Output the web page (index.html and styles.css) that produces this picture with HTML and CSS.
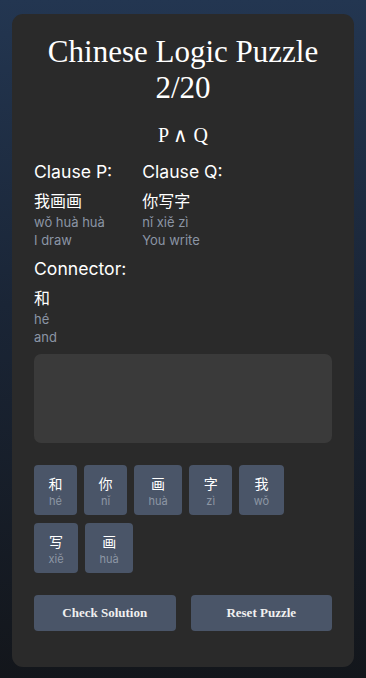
FILE: index.html
```html
<!DOCTYPE html>
<html>
<head>
<meta charset="utf-8">
<link rel="stylesheet" href="styles.css">
</head>
<body>
<div class="card">
  <h1 class="title">Chinese Logic Puzzle<br>2/20</h1>
  <div class="formula">P ∧ Q</div>
  <div class="clauses">
    <div class="clause">
      <div class="label">Clause P:</div>
      <div class="hanzi">我画画</div>
      <div class="sub">wǒ huà huà</div>
      <div class="sub">I draw</div>
    </div>
    <div class="clause">
      <div class="label">Clause Q:</div>
      <div class="hanzi">你写字</div>
      <div class="sub">nǐ xiě zì</div>
      <div class="sub">You write</div>
    </div>
  </div>
  <div class="clause connector">
    <div class="label">Connector:</div>
    <div class="hanzi">和</div>
    <div class="sub">hé</div>
    <div class="sub">and</div>
  </div>
  <div class="dropzone"></div>
  <div class="tiles">
    <div class="tile"><span class="tc">和</span><span class="tp">hé</span></div>
    <div class="tile"><span class="tc">你</span><span class="tp">nǐ</span></div>
    <div class="tile"><span class="tc">画</span><span class="tp">huà</span></div>
    <div class="tile"><span class="tc">字</span><span class="tp">zì</span></div>
    <div class="tile"><span class="tc">我</span><span class="tp">wǒ</span></div>
    <div class="tile"><span class="tc">写</span><span class="tp">xiě</span></div>
    <div class="tile"><span class="tc">画</span><span class="tp">huà</span></div>
  </div>
  <div class="buttons">
    <button class="btn">Check Solution</button>
    <button class="btn">Reset Puzzle</button>
  </div>
</div>
</body>
</html>
```
FILE: styles.css
```css
html, body {
  margin: 0;
  height: 100%;
}
body {
  background: linear-gradient(to bottom, #233651 0%, #1a2536 45%, #13161b 100%);
  padding: 14px 12px 12px;
  box-sizing: border-box;
  font-family: Inter, "Noto Sans CJK SC", sans-serif;
  color: #fff;
}
.card {
  background: #2a2a2a;
  border-radius: 11px;
  padding: 20px 22px 36px;
}
.title {
  margin: 0;
  font-family: "Liberation Serif", serif;
  font-weight: normal;
  font-size: 31px;
  line-height: 36px;
  text-align: center;
  color: #fff;
}
.formula {
  font-family: "Liberation Serif", serif;
  font-size: 20px;
  line-height: 24px;
  text-align: center;
  margin-top: 17px;
  color: #fff;
}
.clauses {
  display: flex;
  gap: 30px;
  margin-top: 15px;
}
.label {
  font-size: 17.6px;
  line-height: 20px;
  color: #fff;
}
.hanzi {
  font-family: "Noto Sans CJK SC", sans-serif;
  font-size: 16px;
  line-height: 24px;
  margin-top: 6px;
  margin-bottom: 1px;
  color: #fff;
}
.sub {
  font-size: 13px;
  line-height: 18px;
  color: #8b95a5;
}
.connector {
  margin-top: 10px;
}
.dropzone {
  margin-top: 8px;
  height: 89px;
  background: #3a3a3a;
  border-radius: 7px;
}
.tiles {
  display: flex;
  flex-wrap: wrap;
  gap: 8px 7px;
  margin-top: 22px;
  width: 260px;
}
.tile {
  display: flex;
  flex-direction: column;
  align-items: center;
  box-sizing: border-box;
  height: 50px;
  padding: 9px 14.5px 0;
  background: #4a5568;
  border-radius: 4px;
}
.tc {
  font-family: "Noto Sans CJK SC", sans-serif;
  font-size: 14px;
  line-height: 18px;
  color: #fff;
}
.tp {
  font-size: 11px;
  line-height: 16px;
  margin-top: 1px;
  color: #8d97a5;
}
.buttons {
  display: flex;
  gap: 15px;
  margin-top: 22px;
}
.btn {
  flex: 1;
  height: 36px;
  border: none;
  border-radius: 4px;
  background: #4a5568;
  color: #f0f0f0;
  font-family: "Liberation Serif", serif;
  font-weight: bold;
  font-size: 13px;
}
```
